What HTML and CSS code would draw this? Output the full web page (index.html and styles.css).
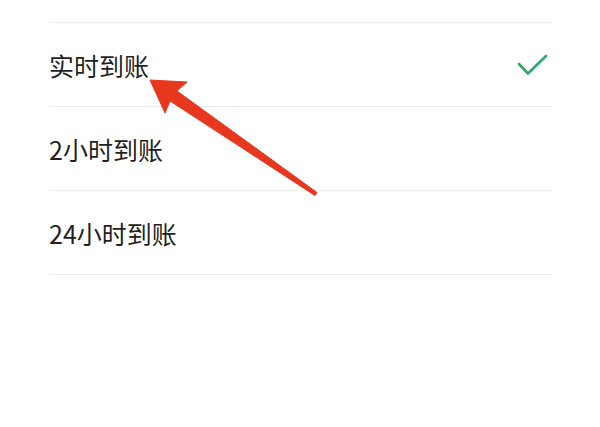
FILE: index.html
```html
<!DOCTYPE html>
<html lang="zh-CN">
<head>
  <meta charset="UTF-8" />
  <meta name="viewport" content="width=device-width, initial-scale=1" />
  <title>到账时间</title>
  <link rel="stylesheet" href="styles.css">
</head>
<body>

  <main class="page">
    <ul class="options">
      <li class="option">
        <span class="label">实时到账</span>
        <svg class="check" width="32" height="24" viewBox="0 0 32 24" aria-hidden="true">
          <polyline points="2,11 11,20.5 29,3" />
        </svg>
      </li>
      <li class="option">
        <span class="label">2小时到账</span>
      </li>
      <li class="option">
        <span class="label">24小时到账</span>
      </li>
    </ul>

    <!-- Hinweispfeil -->
    <svg class="pointer" width="600" height="427" viewBox="0 0 600 427" aria-hidden="true">
      <polygon points="150,80 187,82 177,91 317,192.5 315,195.5 170,101 165,113" />
    </svg>
  </main>

</body>
</html>
```

FILE: styles.css
```css
:root {
  --text-dark: #1f1f1f;
  --line: #ededed;
  --green: #2fa66b;
  --arrow: #e8371f;
}

body {
  margin: 0;
  padding: 0;
  background: #ffffff;
  color: var(--text-dark);
  font-family: "Noto Sans CJK SC", "Noto Sans", sans-serif;
}

.page {
  position: relative;
  height: 427px;
  overflow: hidden;
}

.options {
  list-style: none;
  margin: 22px 48px 0 49px;
  padding: 0;
  border-top: 1px solid var(--line);
}

.option {
  display: flex;
  align-items: center;
  justify-content: space-between;
  height: 84px;
  padding-top: 1px;
  box-sizing: border-box;
  border-bottom: 1px solid var(--line);
}

.option .label {
  font-size: 25px;
  line-height: 1;
}

.check {
  margin-right: 3px;
  fill: none;
  stroke: var(--green);
  stroke-width: 2.6;
  stroke-linecap: round;
  stroke-linejoin: round;
}

/* Pfeil liegt über der Liste */
.pointer {
  position: absolute;
  top: 0;
  left: 0;
  pointer-events: none;
}

.pointer polygon {
  fill: var(--arrow);
  stroke: var(--arrow);
  stroke-width: 1;
  stroke-linejoin: round;
}
```
